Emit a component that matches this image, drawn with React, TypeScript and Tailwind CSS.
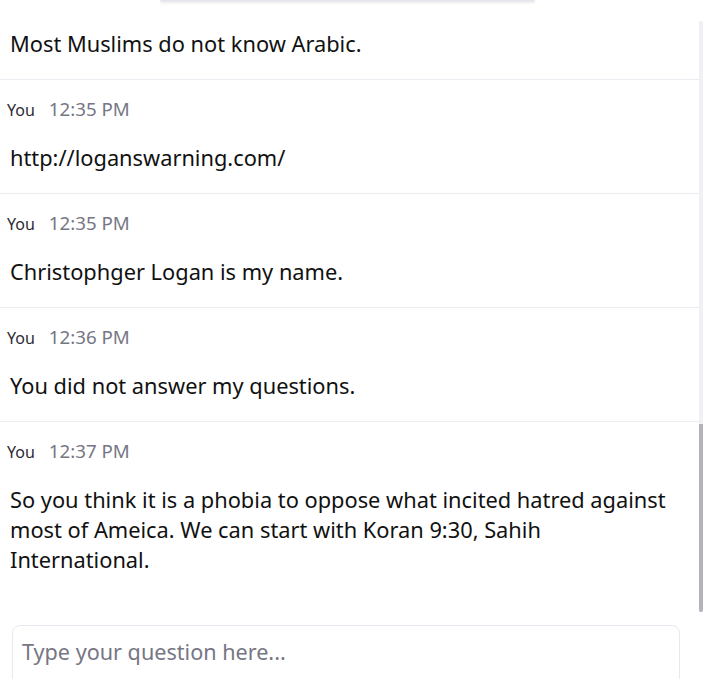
import React from 'react';

type Message = {
  author?: string;
  time?: string;
  text: string;
};

// the list is scrolled: the first block's header sits hidden under the top bar
const messages: Message[] = [
  { text: 'Most Muslims do not know Arabic.' },
  { author: 'You', time: '12:35 PM', text: 'http://loganswarning.com/' },
  { author: 'You', time: '12:35 PM', text: 'Christophger Logan is my name.' },
  { author: 'You', time: '12:36 PM', text: 'You did not answer my questions.' },
  {
    author: 'You',
    time: '12:37 PM',
    text: 'So you think it is a phobia to oppose what incited hatred against most of Ameica. We can start with Koran 9:30, Sahih International.',
  },
];

function MessageRow({ msg, last }: { msg: Message; last: boolean }) {
  const hasHeader = !!msg.author;
  return (
    <div
      className={`${hasHeader ? 'pt-[17px]' : 'pt-[8px]'} pb-[20px] pl-[7px] pr-[29px] ${
        last ? '' : 'border-b border-[#ebebf1]'
      }`}
    >
      {hasHeader && (
        <div className="flex items-baseline gap-[14px] h-[24px] leading-[24px] mb-[22px]">
          <span className="text-[16px] text-[#2b2b33]">{msg.author}</span>
          <span className="text-[18.7px] text-[#767684]">{msg.time}</span>
        </div>
      )}
      <p className="pl-[3px] text-[21.8px] leading-[30px] text-[#111111]">{msg.text}</p>
    </div>
  );
}

export default function App() {
  return (
    <div
      className="relative w-[703px] h-[679px] overflow-hidden bg-white flex flex-col"
      style={{ fontFamily: '"Noto Sans", "Open Sans", sans-serif' }}
    >
      <div className="absolute top-0 left-[160px] w-[375px] h-[2px] rounded-b bg-[#e6e6ee] shadow-sm" />

      <div className="flex h-[591px] mt-[21px] shrink-0">
        <div className="flex-1 overflow-hidden">
          {messages.map((m, i) => (
            <MessageRow key={i} msg={m} last={i === messages.length - 1} />
          ))}
        </div>
        <div className="w-[4px] rounded-t-full bg-[#f0f0f4] flex flex-col justify-end">
          <div className="h-[188px] rounded-b-full bg-[#b3b3bb]" />
        </div>
      </div>

      <div className="pt-[13px] pl-[12px] pr-[23px] shrink-0">
        <div className="h-[80px] rounded-[8px] border border-[#e8e8f0] px-[9px] pt-[12px]">
          <span className="text-[21.6px] leading-[28px] text-[#767684]">Type your question here...</span>
        </div>
      </div>
    </div>
  );
}
